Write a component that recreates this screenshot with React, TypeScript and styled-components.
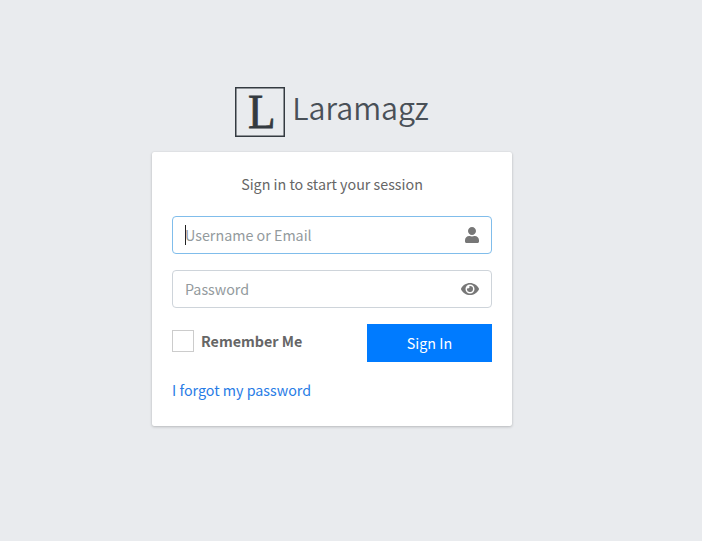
import React from "react";
import styled, { createGlobalStyle } from "styled-components";
import { FaEye, FaUser } from "react-icons/fa";

const GlobalStyle = createGlobalStyle`
  *, *::before, *::after { box-sizing: border-box; }
  body {
    margin: 0;
    background: #e9ebee;
    color: #666;
    font-family: "Noto Sans CJK SC", "Noto Sans", sans-serif;
    font-size: 14.3px;
    line-height: 24px;
  }
`;

const Page = styled.main`
  display: flex;
  flex-direction: column;
  align-items: center;
  width: 664px;
  min-height: 541px;
  padding-top: 87px;
`;

const Brand = styled.header`
  display: flex;
  align-items: center;
  gap: 7px;
  height: 50px;
  margin-bottom: 15px;
`;

const LogoMark = styled.svg`
  display: block;
  width: 50px;
  height: 50px;
  overflow: visible;
`;

const BrandName = styled.span`
  color: #495057;
  font-size: 30.4px;
  line-height: 44px;
  font-weight: 350;
  margin-top: -10px;
`;

const Card = styled.section`
  width: 360px;
  height: 274px;
  padding: 20px;
  background: #fff;
  border-radius: 2px;
  box-shadow: 0 0 1px rgba(0, 0, 0, 0.125), 0 1px 3px rgba(0, 0, 0, 0.2);
`;

const Intro = styled.p`
  margin: 0 0 20px;
  text-align: center;
`;

const Field = styled.label<{ $focused?: boolean }>`
  display: flex;
  align-items: center;
  height: 38px;
  margin-bottom: 16px;
  padding: 0 12px;
  border: 1px solid ${(p) => (p.$focused ? "#80bdeb" : "#ced4da")};
  border-radius: 4px;
  color: #777;

  svg { flex: none; }
`;

const UserIcon = styled(FaUser)`
  width: 14px;
  height: 16px;
`;

const Caret = styled.span`
  width: 1px;
  height: 20px;
  margin-right: -1px;
  background: #222;
`;

const Input = styled.input`
  flex: 1;
  min-width: 0;
  height: 36px;
  padding: 0 0 2px;
  border: 0;
  outline: 0;
  background: transparent;
  color: #495057;
  font: inherit;

  &::placeholder { color: #939a9d; opacity: 1; }
`;

const Actions = styled.div`
  display: flex;
  justify-content: space-between;
  align-items: flex-start;
  height: 38px;
  margin-bottom: 16px;
`;

const Remember = styled.label`
  display: flex;
  align-items: center;
  gap: 7px;
  margin-top: 6px;
  height: 22px;
  font-weight: 700;
`;

const Box = styled.span`
  width: 22px;
  height: 22px;
  border: 1px solid #ccc;
`;

const Submit = styled.button`
  width: 125px;
  height: 38px;
  padding: 0;
  border: 0;
  background: #007bff;
  color: #fff;
  font: inherit;
`;

const Link = styled.a`
  color: #287ce6;
  text-decoration: none;
`;

export default function App() {
  return (
    <>
      <GlobalStyle />
      <Page>
        <Brand>
          <LogoMark viewBox="0 0 50 50">
            <rect x="0.75" y="0.75" width="48.5" height="48.5" fill="none" stroke="#343a40" strokeWidth="1.5" />
            <text x="13" y="41" fontFamily="Liberation Serif, serif" fontSize="48" fill="#343a40" stroke="#343a40" strokeWidth="0.8" textLength="27.5" lengthAdjust="spacingAndGlyphs">L</text>
          </LogoMark>
          <BrandName>Laramagz</BrandName>
        </Brand>
        <Card>
          <Intro>Sign in to start your session</Intro>
          <Field $focused>
            <Caret />
            <Input placeholder="Username or Email" />
            <UserIcon />
          </Field>
          <Field>
            <Input type="password" placeholder="Password" />
            <FaEye size={18} />
          </Field>
          <Actions>
            <Remember>
              <Box />
              Remember Me
            </Remember>
            <Submit>Sign In</Submit>
          </Actions>
          <Link>I forgot my password</Link>
        </Card>
      </Page>
    </>
  );
}
